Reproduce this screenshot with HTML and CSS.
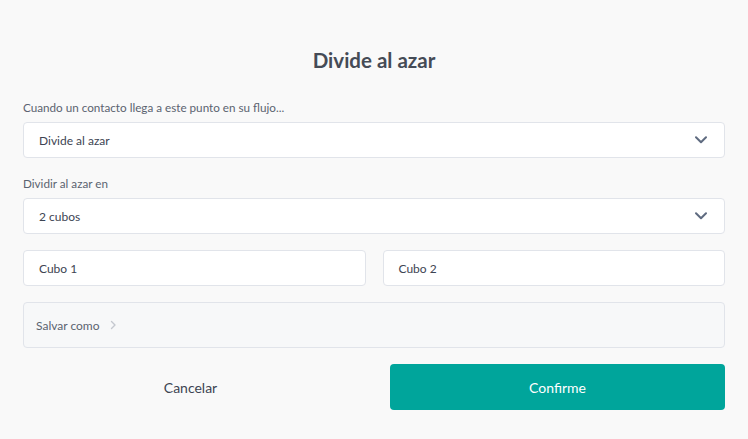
FILE: index.html
```html
<!DOCTYPE html>
<html lang="es">
<head>
<meta charset="utf-8">
<link rel="stylesheet" href="styles.css">
</head>
<body>
<div class="modal">
  <h1 class="title">Divide al azar</h1>
  <div class="label">Cuando un contacto llega a este punto en su flujo...</div>
  <div class="select">
    <span>Divide al azar</span>
    <svg class="chev" width="12" height="8" viewBox="0 0 12 8"><path d="M1 1.2 L6 6.2 L11 1.2" fill="none" stroke="#5f6b80" stroke-width="2" stroke-linecap="round" stroke-linejoin="round"/></svg>
  </div>
  <div class="label label2">Dividir al azar en</div>
  <div class="select">
    <span>2 cubos</span>
    <svg class="chev" width="12" height="8" viewBox="0 0 12 8"><path d="M1 1.2 L6 6.2 L11 1.2" fill="none" stroke="#5f6b80" stroke-width="2" stroke-linecap="round" stroke-linejoin="round"/></svg>
  </div>
  <div class="buckets">
    <div class="input">Cubo 1</div>
    <div class="input">Cubo 2</div>
  </div>
  <div class="saveas">
    <span>Salvar como</span>
    <svg class="arrow" width="7" height="10" viewBox="0 0 7 10"><path d="M1.5 1.5 L5 5 L1.5 8.5" fill="none" stroke="#c4c8cf" stroke-width="1.4" stroke-linecap="round" stroke-linejoin="round"/></svg>
  </div>
  <div class="actions">
    <button class="btn cancel">Cancelar</button>
    <button class="btn confirm">Confirme</button>
  </div>
</div>
</body>
</html>
```
FILE: styles.css
```css
html, body {
  margin: 0;
  padding: 0;
  background: #f9f9f9;
}
body {
  font-family: Lato, "Open Sans", Arial, sans-serif;
  color: #3d4452;
}
.modal {
  width: 748px;
  height: 439px;
  box-sizing: border-box;
  padding: 45px 23px 0 23px;
  display: flex;
  flex-direction: column;
}
.title {
  margin: 0;
  font-size: 20.5px;
  font-weight: 700;
  color: #454b56;
  text-align: center;
  line-height: 30px;
}
.label {
  margin-top: 24px;
  font-size: 11.7px;
  line-height: 16px;
  color: #5b6370;
  height: 16px;
}
.label2 {
  margin-top: 17px;
}
.select {
  margin-top: 7px;
  height: 36px;
  box-sizing: border-box;
  background: #fff;
  border: 1px solid #e1e4ea;
  border-radius: 4px;
  display: flex;
  align-items: center;
  justify-content: space-between;
  padding: 0 17px 0 15px;
  font-size: 12px;
  color: #3d4452;
}
.chev {
  display: block;
}
.buckets {
  margin-top: 16px;
  display: grid;
  grid-template-columns: 1fr 1fr;
  gap: 17px;
}
.input {
  height: 36px;
  box-sizing: border-box;
  background: #fff;
  border: 1px solid #e1e4ea;
  border-radius: 4px;
  display: flex;
  align-items: center;
  padding: 0 15px;
  font-size: 12px;
  color: #3d4452;
}
.saveas {
  margin-top: 16px;
  height: 46px;
  box-sizing: border-box;
  background: #f7f8f9;
  border: 1px solid #e1e4ea;
  border-radius: 4px;
  display: flex;
  align-items: center;
  gap: 10px;
  padding: 0 12px;
  font-size: 12px;
  color: #5b6370;
}
.arrow {
  display: block;
}
.actions {
  margin-top: 16px;
  display: grid;
  grid-template-columns: 335px 335px;
  justify-content: space-between;
}
.btn {
  height: 46px;
  border: none;
  border-radius: 4px;
  font-family: Lato, "Open Sans", Arial, sans-serif;
  font-size: 14px;
  cursor: pointer;
}
.cancel {
  background: transparent;
  color: #3d4452;
}
.confirm {
  background: #00a59b;
  color: #fff;
}
```
